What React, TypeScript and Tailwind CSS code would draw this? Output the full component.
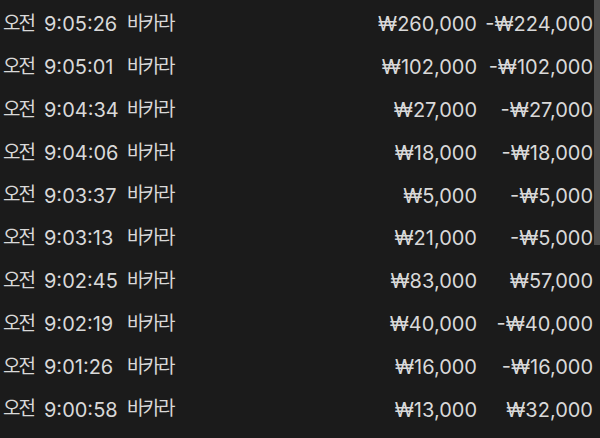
import React from 'react';

interface Bet {
    time: string;
    game: string;
    amount: string;
    result: string;
}

const bets: Bet[] = [
    { time: '9:05:26', game: '바카라', amount: '₩260,000', result: '-₩224,000' },
    { time: '9:05:01', game: '바카라', amount: '₩102,000', result: '-₩102,000' },
    { time: '9:04:34', game: '바카라', amount: '₩27,000', result: '-₩27,000' },
    { time: '9:04:06', game: '바카라', amount: '₩18,000', result: '-₩18,000' },
    { time: '9:03:37', game: '바카라', amount: '₩5,000', result: '-₩5,000' },
    { time: '9:03:13', game: '바카라', amount: '₩21,000', result: '-₩5,000' },
    { time: '9:02:45', game: '바카라', amount: '₩83,000', result: '₩57,000' },
    { time: '9:02:19', game: '바카라', amount: '₩40,000', result: '-₩40,000' },
    { time: '9:01:26', game: '바카라', amount: '₩16,000', result: '-₩16,000' },
    { time: '9:00:58', game: '바카라', amount: '₩13,000', result: '₩32,000' },
];

export default function App() {
    return (
        <div className="relative w-[600px] h-[438px] overflow-hidden bg-[#1b1b1b] text-[#d9d9d9] font-['Inter','Noto_Sans_CJK_KR',sans-serif] text-[20px]">
            {/* history rows */}
            <div className="flex flex-col pt-[3px] pr-[7px]">
                {bets.map((b, i) => (
                    <div key={i} className="flex items-center h-[42.8px] whitespace-nowrap">
                        <div className="w-[127px] pl-[3px] flex items-center gap-[10px]">
                            <span className="text-[19px] tracking-[-2px]">오전</span>
                            <span>{b.time}</span>
                        </div>
                        <div className="flex-1 text-[19px] tracking-[-2px]">{b.game}</div>
                        <div className="w-[120px] text-right">{b.amount}</div>
                        <div className="w-[116px] text-right">{b.result}</div>
                    </div>
                ))}
            </div>

            {/* scrollbar thumb */}
            <div className="absolute right-0 top-0 w-[6px] h-[245px] bg-[#4d4d4d]" />
        </div>
    );
}
